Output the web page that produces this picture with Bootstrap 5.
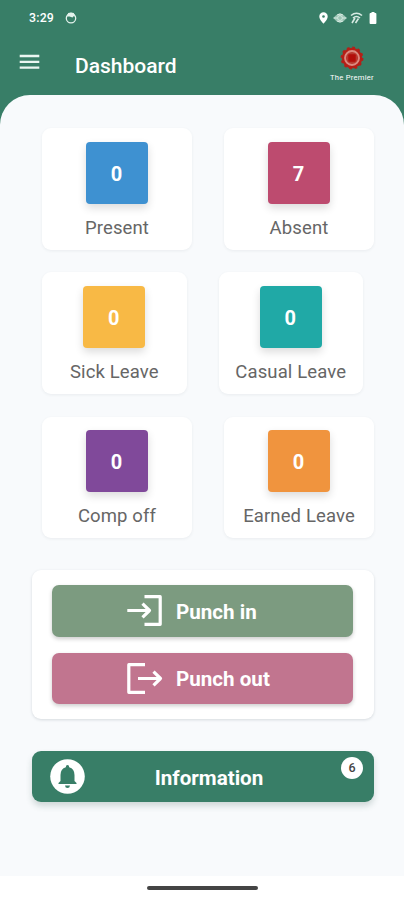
<!DOCTYPE html>
<html lang="en">
<head>
<meta charset="utf-8">
<meta name="viewport" content="width=device-width, initial-scale=1">
<title>Dashboard</title>
<link href="https://cdn.jsdelivr.net/npm/bootstrap@5.3.0/dist/css/bootstrap.min.css" rel="stylesheet">
<style>
body{font-family:Roboto,sans-serif;background:#387e67;height:900px;overflow:hidden}
svg{display:block;flex:none}
.status{height:34px;padding:1px 27px 0 29px;font-size:12.3px;letter-spacing:.2px}
.status-time{padding-top:1px}
.ic-app{margin-left:11px}.ic-eye{margin-left:5px}.ic-wifi{margin-left:3px}.ic-batt{margin-left:6px}
.appbar{height:61px;padding:0 29px 0 19px}
.menu-btn{margin-top:-6px}
.title{font-size:21px;font-weight:500;margin-left:35px;line-height:24px;padding-top:2px}
.brand{width:46px;margin-top:-1px}
.brand-name{font-size:7.6px;line-height:9px;margin-top:3px;letter-spacing:.25px;white-space:nowrap}
.sheet{height:781px;background:#f8fafc;border-radius:30px 30px 0 0;padding:33px 30px 0 32px}
.tiles{padding-left:10px;gap:23px}
.tiles>.d-flex{gap:32px;height:121.3px}
.stat{width:150px;height:121.5px;padding-top:13.5px;border:0;border-radius:9px;box-shadow:0 1px 3px rgba(60,80,90,.08)}
.stat-sm{width:144.5px}
.num{width:62px;height:62px;padding:2px 1px 0 0;border-radius:4px;color:#fff;font-size:20px;font-weight:700;box-shadow:0 4px 9px rgba(0,0,0,.14)}
.lbl{font-size:18.5px;font-weight:400;line-height:24px;margin-top:12.3px;color:#666;white-space:nowrap;letter-spacing:.12px}
.blue{background:#3e91d1}.rose{background:#bd4b6f}.amber{background:#f8b945}
.teal{background:#20a9a6}.violet{background:#80499a}.orange{background:#f0943e}
.punch{margin-top:32px;height:149px;padding:15.5px 21px 0 20px;gap:16px;border:0;border-radius:9px;box-shadow:0 1px 3px rgba(60,80,90,.18)}
.pbtn{height:51.5px;border:0;border-radius:7px;padding:0 0 0 73px;font-size:20.6px;font-weight:700;gap:12px;color:#fff;box-shadow:0 2px 4px rgba(0,0,0,.2)}
.pbtn span{padding-top:2.5px}
.pin{background:#7c9b80}.pout{background:#c1758f}
.info{margin-top:32px;height:51px;border:0;border-radius:9px;padding:4px 0 0 12px;background:#387e67;color:#fff;font-size:20.6px;font-weight:700;box-shadow:0 4px 6px rgba(40,80,70,.2)}
.bell{left:18px;top:8px}
.count{right:11px;top:6px;width:22px;height:22px;background:#fff;color:#444;font-size:12.5px;font-weight:500}
.navbar-os{height:24px;background:#fff;padding-top:10px}
.handle{width:111px;height:4px;border-radius:2px;background:#444}
</style>
<script src="https://cdn.jsdelivr.net/npm/bootstrap@5.3.0/dist/js/bootstrap.bundle.min.js"></script>
</head>
<body>
<header class="text-white">
  <div class="status d-flex align-items-center">
    <span class="status-time fw-medium">3:29</span>
    <svg class="ic-app" width="12" height="12" viewBox="0 0 12 12"><circle cx="6" cy="6.2" r="4.7" fill="none" stroke="#e3f2ec" stroke-width="1.3"/><path d="M1.8 4.4L3.2 1Q6 .2 8.8 1L10.2 4.4L8.5 4.2L7.5 5.4L4.5 4.4Z" fill="#e3f2ec"/></svg>
    <div class="d-flex align-items-center ms-auto">
      <svg width="9" height="12" viewBox="0 0 9 12"><path d="M4.5 .3A4.2 4.2 0 0 0 .3 4.5C.3 7.5 4.5 11.8 4.5 11.8S8.7 7.5 8.7 4.5A4.2 4.2 0 0 0 4.5 .3Z" fill="#fff"/><circle cx="4.5" cy="4.5" r="1.3" fill="#387e67"/></svg>
      <svg class="ic-eye" width="14" height="12" viewBox="0 0 14 12"><path d="M.5 6Q7-3 13.5 6Q7 15 .5 6Z" fill="#9bc4b4"/><path d="M.5 6H4M10 6H13.5M4 3Q7 1 10 3M4 9Q7 11 10 9" fill="none" stroke="#d7ebe3"/><circle cx="7" cy="6" r="2.4" fill="none" stroke="#d7ebe3"/></svg>
      <svg class="ic-wifi" width="13" height="12" viewBox="0 0 13 12"><path d="M1 3.5Q6.5-1 12 3.5M3 6Q6.5 3 10 6M2 11L5 6M5.5 11L8.5 6.5" fill="none" stroke="#d7ebe3" stroke-width="1.6"/></svg>
      <svg class="ic-batt" width="8" height="12" viewBox="0 0 8 12"><path d="M2.5 0H5.5V1H6.5Q7.4 1 7.4 2V11Q7.4 12 6.5 12H1.5Q.6 12 .6 11V2Q.6 1 1.5 1H2.5Z" fill="#fff"/></svg>
    </div>
  </div>
  <div class="appbar d-flex align-items-center">
    <svg class="menu-btn" width="21" height="16" viewBox="0 0 21 16"><path d="M.7 2H20.3M.7 7.8H20.3M.7 13.6H20.3" stroke="#eaf6f1" stroke-width="2.3"/></svg>
    <h1 class="title mb-0">Dashboard</h1>
    <div class="brand ms-auto d-flex flex-column align-items-center">
      <svg width="24" height="24" viewBox="0 0 24 24"><circle cx="12" cy="12" r="10.3" fill="#b51f17"/><circle cx="12" cy="12" r="10.4" fill="none" stroke="#b51f17" stroke-width="2" stroke-dasharray="2.7 2.74"/><circle cx="12" cy="12" r="7" fill="#b93a30" stroke="#dc8a80" stroke-width="1.8"/><rect x="8.3" y="8.3" width="7.4" height="7.4" rx="1" fill="#b30e0a"/></svg>
      <span class="brand-name">The Premier</span>
    </div>
  </div>
</header>
<main class="sheet">
  <section class="tiles d-flex flex-column">
    <div class="d-flex">
      <div class="card stat align-items-center"><div class="num blue d-flex align-items-center justify-content-center">0</div><div class="lbl">Present</div></div>
      <div class="card stat align-items-center"><div class="num rose d-flex align-items-center justify-content-center">7</div><div class="lbl">Absent</div></div>
    </div>
    <div class="d-flex">
      <div class="card stat stat-sm align-items-center"><div class="num amber d-flex align-items-center justify-content-center">0</div><div class="lbl">Sick Leave</div></div>
      <div class="card stat stat-sm align-items-center"><div class="num teal d-flex align-items-center justify-content-center">0</div><div class="lbl">Casual Leave</div></div>
    </div>
    <div class="d-flex">
      <div class="card stat align-items-center"><div class="num violet d-flex align-items-center justify-content-center">0</div><div class="lbl">Comp off</div></div>
      <div class="card stat align-items-center"><div class="num orange d-flex align-items-center justify-content-center">0</div><div class="lbl">Earned Leave</div></div>
    </div>
  </section>
  <section class="card punch">
    <button class="btn pbtn pin d-flex align-items-center" type="button">
      <svg width="39" height="36" viewBox="0 0 39 36"><path d="M19.5 3.7H35.2V31.3H19.5M2.3 17.5H24M17.5 10.7L24.5 17.5L17.5 24.3" fill="none" stroke="#fff" stroke-width="3.2" stroke-linejoin="round"/></svg>
      <span>Punch in</span>
    </button>
    <button class="btn pbtn pout d-flex align-items-center" type="button">
      <svg width="39" height="36" viewBox="0 0 39 36"><path d="M20 3.7H3.8V31.3H20M13 17.5H35M28.5 10.7L35.5 17.5L28.5 24.3" fill="none" stroke="#fff" stroke-width="3.2" stroke-linejoin="round"/></svg>
      <span>Punch out</span>
    </button>
  </section>
  <button class="btn info w-100 position-relative d-flex align-items-center justify-content-center" type="button">
    <svg class="bell position-absolute" width="35" height="35" viewBox="0 0 35 35"><circle cx="17.5" cy="17.5" r="17.3" fill="#fff"/><path d="M17.5 6Q19.2 6 19.2 8.3Q24.5 10 24.5 16V22L26.5 24V25H8.5V24L10.5 22V16Q10.5 10 15.8 8.3Q15.8 6 17.5 6ZM15 26.5H20Q19.8 29 17.5 29Q15.2 29 15 26.5Z" fill="#387e67"/></svg>
    <span>Information</span>
    <span class="count position-absolute rounded-circle d-flex align-items-center justify-content-center">6</span>
  </button>
</main>
<footer class="navbar-os d-flex justify-content-center"><div class="handle"></div></footer>
</body>
</html>
